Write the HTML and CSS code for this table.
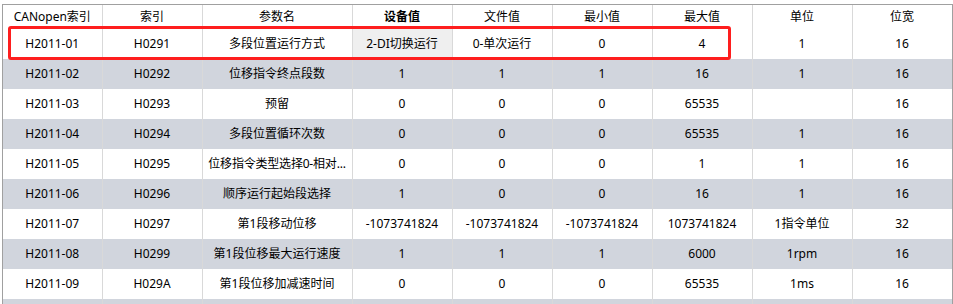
FILE: index.html
```html
<!DOCTYPE html>
<html lang="zh">
<head>
<meta charset="utf-8">
<link rel="stylesheet" href="styles.css">
</head>
<body>
<div class="frame">
  <table class="grid">
    <colgroup>
      <col class="c1"><col class="c2"><col class="c3"><col class="c4"><col class="c5"><col class="c6"><col class="c7"><col class="c8"><col class="c9">
    </colgroup>
    <thead>
      <tr>
        <th>CANopen索引</th><th>索引</th><th>参数名</th><th class="bold">设备值</th><th>文件值</th><th>最小值</th><th>最大值</th><th>单位</th><th>位宽</th>
      </tr>
    </thead>
    <tbody>
      <tr><td>H2011-01</td><td>H0291</td><td>多段位置运行方式</td><td class="sel">2-DI切换运行</td><td>0-单次运行</td><td>0</td><td>4</td><td>1</td><td>16</td></tr>
      <tr><td>H2011-02</td><td>H0292</td><td>位移指令终点段数</td><td>1</td><td>1</td><td>1</td><td>16</td><td>1</td><td>16</td></tr>
      <tr><td>H2011-03</td><td>H0293</td><td>预留</td><td>0</td><td>0</td><td>0</td><td>65535</td><td></td><td>16</td></tr>
      <tr><td>H2011-04</td><td>H0294</td><td>多段位置循环次数</td><td>0</td><td>0</td><td>0</td><td>65535</td><td>1</td><td>16</td></tr>
      <tr><td>H2011-05</td><td>H0295</td><td class="ell"><span class="clip">位移指令类型选择0-相对...</span></td><td>0</td><td>0</td><td>0</td><td>1</td><td>1</td><td>16</td></tr>
      <tr><td>H2011-06</td><td>H0296</td><td>顺序运行起始段选择</td><td>1</td><td>0</td><td>0</td><td>16</td><td>1</td><td>16</td></tr>
      <tr><td>H2011-07</td><td>H0297</td><td>第1段移动位移</td><td>-1073741824</td><td>-1073741824</td><td>-1073741824</td><td>1073741824</td><td>1指令单位</td><td>32</td></tr>
      <tr><td>H2011-08</td><td>H0299</td><td>第1段位移最大运行速度</td><td>1</td><td>1</td><td>1</td><td>6000</td><td>1rpm</td><td>16</td></tr>
      <tr><td>H2011-09</td><td>H029A</td><td>第1段位移加减速时间</td><td>0</td><td>0</td><td>0</td><td>65535</td><td>1ms</td><td>16</td></tr>
      <tr><td></td><td></td><td></td><td></td><td></td><td></td><td></td><td></td><td></td></tr>
    </tbody>
  </table>
  <div class="mark"></div>
</div>
</body>
</html>
```
FILE: styles.css
```css
html, body {
  margin: 0;
  padding: 0;
  background: #ffffff;
  overflow: hidden;
}
body {
  font-family: "Noto Sans", "Noto Sans CJK SC", sans-serif;
  font-size: 12px;
  color: #000;
}
.frame {
  position: relative;
  margin: 4px 0 0 2px;
  width: 949px;
  height: 300px;
  border-top: 1px solid #a0a0a0;
  border-left: 1px solid #a0a0a0;
  border-right: 1px solid #a0a0a0;
  overflow: hidden;
}
.grid {
  border-collapse: collapse;
  table-layout: fixed;
  width: 948px;
}
.c1 { width: 99px; }
.c2 { width: 100px; }
.c3 { width: 150px; }
.c4, .c5, .c6, .c7, .c8, .c9 { width: 100px; }
.grid th, .grid td {
  padding: 0 4px;
  text-align: center;
  border-right: 1px solid #d9d9d9;
  white-space: nowrap;
  overflow: hidden;
  line-height: 16px;
}
.grid th {
  height: 24px;
  font-weight: normal;
  background: #fff;
}
.grid th.bold { font-weight: bold; }
.grid td { height: 30px; }
.grid tbody tr:nth-child(even) td { background: #d1d5dd; }
.grid td.sel { background: #efefef; }
.grid td.ell { text-align: center; padding: 0 2px; }
.clip { letter-spacing: -0.2px; }
.mark {
  position: absolute;
  left: 5px;
  top: 21px;
  width: 717px;
  height: 28px;
  border: 3px solid #fe1e1e;
  border-radius: 3px;
}
```
